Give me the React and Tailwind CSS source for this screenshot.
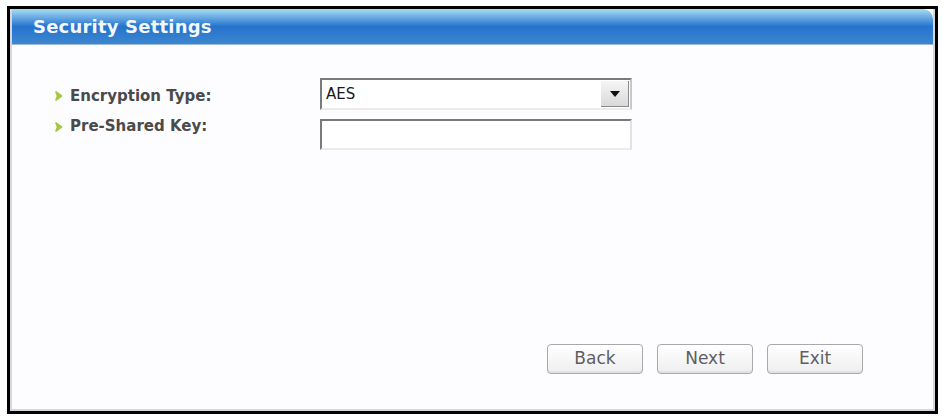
const Bullet = () => (
    <svg width="8" height="10" viewBox="0 0 8 10" className="shrink-0">
        <path d="M1 1 L6.5 5 L1 9 L2.5 5 Z" fill="#a3c83c" stroke="#a3c83c" strokeWidth="1.6" strokeLinejoin="round" />
    </svg>
);

const Field = ({ label, className = '' }) => (
    <div className={`flex items-center gap-[7px] text-[15px] font-bold text-[#4a4a4a] ${className}`}>
        <Bullet />
        <span>{label}</span>
    </div>
);

const Boton = ({ children }) => (
    <button className="w-[96px] h-[30px] rounded-[4px] border border-[#a9a9ad] bg-gradient-to-b from-[#ffffff] to-[#eeeef0] text-[17px] text-[#5e5e62] shadow-[inset_0_-2px_0_#e2e2e6]">
        {children}
    </button>
);

export default function App() {
    return (
        <div className="w-[943px] h-[418px] bg-white pt-[6px] pl-[7px]" style={{ fontFamily: '"DejaVu Sans", sans-serif' }}>
            <div className="w-[931px] h-[408px] border-[3px] border-black bg-white">
                <div className="h-full flex flex-col border-l-2 border-r-2 border-b-2 border-[#d6d6de] bg-[#fdfcfe]">
                    {/* cabecera */}
                    <div className="h-[36px] shrink-0 rounded-tr-[10px] bg-gradient-to-b from-[#a6dcf4] via-[#2473cd] to-[#3d86cf] flex items-center pl-[21px] border-b border-[#9fb7d8]">
                        <span className="text-[18px] font-bold text-[#f2f7fc] tracking-[0.2px]">Security Settings</span>
                    </div>

                    <div className="flex-1 flex flex-col pl-[43px] pt-[33px] pr-[70px] pb-[35px]">
                        <div className="grid grid-cols-[265px_312px] gap-y-[9px] items-start">
                            <Field label="Encryption Type:" className="h-[32px] pt-[4px]" />
                            <div className="h-[32px] flex items-center bg-white border-2 border-t-[#7a7a7a] border-l-[#7a7a7a] border-r-[#c8c8c8] border-b-[#ececec] pl-[4px] pr-[1px]">
                                <span className="flex-1 text-[15px] text-[#1a1a1a]">AES</span>
                                <div className="w-[28px] h-[26px] flex items-center justify-center bg-gradient-to-b from-[#f6f6f6] to-[#d9d9d9] border-r border-b border-[#8a8a8a]">
                                    <svg width="10" height="6" viewBox="0 0 10 6"><path d="M0 0 H10 L5 6 Z" fill="#111" /></svg>
                                </div>
                            </div>
                            <Field label="Pre-Shared Key:" className="h-[31px] -mt-[8px]" />
                            <div className="h-[31px] bg-white border-2 border-t-[#7a7a7a] border-l-[#7a7a7a] border-r-[#e2e2e2] border-b-[#ececec]" />
                        </div>

                        <div className="flex-1" />

                        <div className="flex justify-end gap-[14px]">
                            <Boton>Back</Boton>
                            <Boton>Next</Boton>
                            <Boton>Exit</Boton>
                        </div>
                    </div>
                </div>
            </div>
        </div>
    );
}
